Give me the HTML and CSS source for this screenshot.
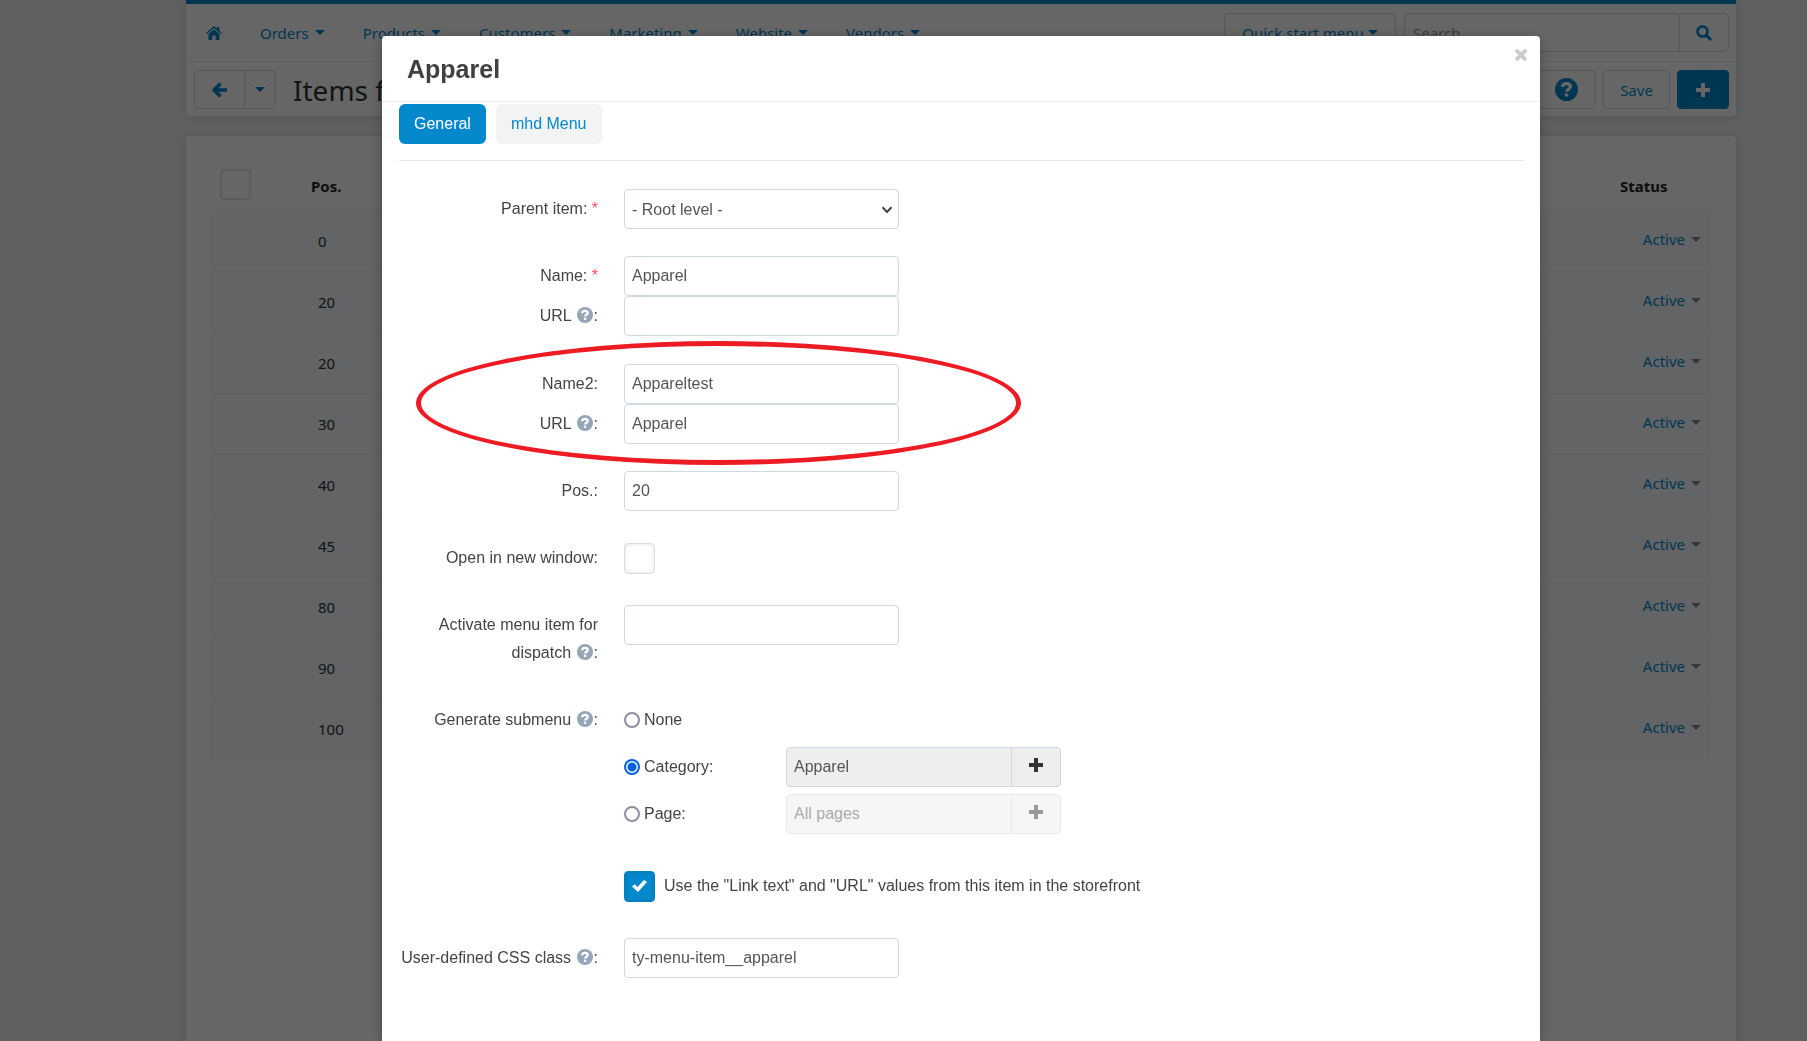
FILE: index.html
```html
<!DOCTYPE html>
<html lang="en">
<head>
<meta charset="utf-8">
<meta name="viewport" content="width=device-width, initial-scale=1">
<title>Apparel</title>
<link rel="stylesheet" href="styles.css">
</head>
<body>
<svg class="sprite" aria-hidden="true">
  <symbol id="i-plus" viewBox="0 0 14 14"><path d="M5 0h4v5h5v4H9v5H5V9H0V5h5z" fill="currentColor"/></symbol>
  <symbol id="i-help" viewBox="0 0 16 16"><circle cx="8" cy="8" r="8" fill="currentColor"/><path d="M5.2 6.300C5.200 4.600 6.400 3.900 8 3.900s2.700.8 2.700 2.200c0 1.700-2.600 1.600-2.600 3.500" fill="none" stroke="#fff" stroke-width="2.300"/><path d="M6.900 10.700h2.300v2.200H6.900z" fill="#fff"/></symbol>
</svg>

<div class="page">
  <header class="topbar">
    <nav class="nav">
      <a class="nav-home" href="#" aria-label="Home"><svg width="16" height="14" viewBox="0 0 16 14"><path d="M8 0l3 2.600V1h2.300v3.600L16 7l-1 1.100L8 2.100 1 8.100 0 7z M8 3.200l5.500 4.700V14H9.600V9.600H6.400V14H2.500V7.900z" fill="currentColor"/></svg></a>
      <a class="nav-link" href="#">Orders<span class="caret"></span></a>
      <a class="nav-link" href="#">Products<span class="caret"></span></a>
      <a class="nav-link" href="#">Customers<span class="caret"></span></a>
      <a class="nav-link" href="#">Marketing<span class="caret"></span></a>
      <a class="nav-link" href="#">Website<span class="caret"></span></a>
      <a class="nav-link" href="#">Vendors<span class="caret"></span></a>
      <div class="nav-tools">
        <button class="btn quick" type="button">Quick start menu<span class="caret"></span></button>
        <form class="search">
          <input class="search-input" type="search" placeholder="Search" aria-label="Search">
          <button class="search-btn" type="button" aria-label="Search"><svg width="16" height="16" viewBox="0 0 16 16"><circle cx="6.500" cy="6.500" r="5" fill="none" stroke="currentColor" stroke-width="2.600"/><path d="M10.200 10.200l4 4" stroke="currentColor" stroke-width="3" stroke-linecap="round"/></svg></button>
        </form>
      </div>
    </nav>
    <div class="actions">
      <div class="split">
        <button class="split-back" type="button" aria-label="Back"><svg width="16" height="16" viewBox="0 0 16 16"><path d="M8.500 1.500L2.200 8l6.300 6.500M3 8h12" fill="none" stroke="currentColor" stroke-width="3.600"/></svg></button>
        <button class="split-more" type="button" aria-label="Recent pages"><span class="caret"></span></button>
      </div>
      <h1 class="page-title">Items for menu</h1>
      <div class="action-tools">
        <button class="btn help-btn" type="button" aria-label="Help"><svg width="23" height="23"><use href="#i-help"/></svg></button>
        <button class="btn save-btn" type="button">Save</button>
        <button class="btn add-btn" type="button" aria-label="Add item"><svg width="14" height="14"><use href="#i-plus"/></svg></button>
      </div>
    </div>
  </header>

  <main class="card">
    <table class="items">
      <thead>
        <tr><th class="c-check"><input class="check" type="checkbox" aria-label="Select all"></th><th class="c-pos">Pos.</th><th></th><th class="c-status">Status</th></tr>
      </thead>
      <tbody>
        <tr><td></td><td class="pos">0</td><td></td><td class="status"><a href="#">Active<span class="caret"></span></a></td></tr>
        <tr><td></td><td class="pos">20</td><td></td><td class="status"><a href="#">Active<span class="caret"></span></a></td></tr>
        <tr><td></td><td class="pos">20</td><td></td><td class="status"><a href="#">Active<span class="caret"></span></a></td></tr>
        <tr><td></td><td class="pos">30</td><td></td><td class="status"><a href="#">Active<span class="caret"></span></a></td></tr>
        <tr><td></td><td class="pos">40</td><td></td><td class="status"><a href="#">Active<span class="caret"></span></a></td></tr>
        <tr><td></td><td class="pos">45</td><td></td><td class="status"><a href="#">Active<span class="caret"></span></a></td></tr>
        <tr><td></td><td class="pos">80</td><td></td><td class="status"><a href="#">Active<span class="caret"></span></a></td></tr>
        <tr><td></td><td class="pos">90</td><td></td><td class="status"><a href="#">Active<span class="caret"></span></a></td></tr>
        <tr><td></td><td class="pos">100</td><td></td><td class="status"><a href="#">Active<span class="caret"></span></a></td></tr>
      </tbody>
    </table>
  </main>
</div>

<div class="backdrop">
  <section class="modal" role="dialog" aria-labelledby="modal-title">
    <header class="modal-head">
      <h2 class="modal-title" id="modal-title">Apparel</h2>
      <button class="close" type="button" aria-label="Close"><svg width="12" height="12" viewBox="0 0 12 12"><path d="M2.200 2.200l7.600 7.600M9.800 2.200l-7.600 7.600" stroke="currentColor" stroke-width="4" stroke-linecap="round"/></svg></button>
    </header>
    <div class="modal-body">
      <div class="tabs">
        <button class="tab tab-active" type="button">General</button>
        <button class="tab" type="button">mhd Menu</button>
      </div>
      <form class="form">
        <div class="row">
          <label class="label" for="parent">Parent item: <span class="req">*</span></label>
          <div class="select-wrap">
            <select class="field" id="parent"><option>- Root level -</option></select>
            <svg class="chevron" width="12" height="8" viewBox="0 0 12 8"><path d="M1.500 1.200L6 6l4.500-4.800" fill="none" stroke="currentColor" stroke-width="2"/></svg>
          </div>
        </div>
        <div class="pair">
          <div class="row">
            <label class="label" for="name">Name: <span class="req">*</span></label>
            <input class="field" id="name" type="text" value="Apparel">
          </div>
          <div class="row">
            <label class="label" for="url">URL <svg class="hint" width="16" height="16"><use href="#i-help"/></svg>:</label>
            <input class="field" id="url" type="text">
          </div>
        </div>
        <div class="pair pair-marked">
          <div class="row">
            <label class="label" for="name2">Name2:</label>
            <input class="field" id="name2" type="text" value="Appareltest">
          </div>
          <div class="row">
            <label class="label" for="url2">URL <svg class="hint" width="16" height="16"><use href="#i-help"/></svg>:</label>
            <input class="field" id="url2" type="text" value="Apparel">
          </div>
          <div class="marker"></div>
        </div>
        <div class="row">
          <label class="label" for="position">Pos.:</label>
          <input class="field" id="position" type="text" value="20">
        </div>
        <div class="row">
          <label class="label" for="newwin">Open in new window:</label>
          <div class="line"><input class="check" id="newwin" type="checkbox"></div>
        </div>
        <div class="row">
          <label class="label" for="dispatch">Activate menu item for dispatch <svg class="hint" width="16" height="16"><use href="#i-help"/></svg>:</label>
          <input class="field" id="dispatch" type="text">
        </div>
        <div class="row" role="radiogroup" aria-labelledby="submenu">
          <span class="label" id="submenu">Generate submenu <svg class="hint" width="16" height="16"><use href="#i-help"/></svg>:</span>
          <div class="choices">
            <div class="line"><label class="choice"><input class="radio" type="radio" name="submenu">None</label></div>
            <div class="line">
              <label class="choice"><input class="radio" type="radio" name="submenu" checked>Category:</label>
              <div class="picker"><input class="picker-input" type="text" value="Apparel" readonly aria-label="Category"><button class="picker-btn" type="button" aria-label="Choose category"><svg width="14" height="14"><use href="#i-plus"/></svg></button></div>
            </div>
            <div class="line">
              <label class="choice"><input class="radio" type="radio" name="submenu">Page:</label>
              <div class="picker picker-off"><input class="picker-input" type="text" value="All pages" readonly aria-label="Page"><button class="picker-btn" type="button" aria-label="Choose page"><svg width="14" height="14"><use href="#i-plus"/></svg></button></div>
            </div>
          </div>
        </div>
        <div class="row row-check">
          <span class="label"></span>
          <label class="line line-check"><input class="check" type="checkbox" checked>Use the "Link text" and "URL" values from this item in the storefront</label>
        </div>
        <div class="row">
          <label class="label" for="cssclass">User-defined CSS class <svg class="hint" width="16" height="16"><use href="#i-help"/></svg>:</label>
          <input class="field" id="cssclass" type="text" value="ty-menu-item__apparel">
        </div>
      </form>
    </div>
  </section>
</div>
</body>
</html>
```
FILE: styles.css
```css
* { box-sizing: border-box; }

html, body { height: 100%; }

body {
  margin: 0;
  overflow: hidden;
  background: #ebeff3;
  color: #333;
  font-family: "Noto Sans", sans-serif;
  font-size: 15px;
}

button, input, select { font: inherit; color: inherit; margin: 0; }
button { cursor: pointer; padding: 0; background: none; border: 0; }
a { color: #0388cc; text-decoration: none; }
svg { display: block; flex: none; }
.sprite { position: absolute; width: 0; height: 0; }

.page {
  min-height: 100%;
  display: flex;
  flex-direction: column;
  gap: 20px;
  padding: 0 71px 0 186px;
}

.caret {
  display: inline-block;
  border: 5px solid transparent;
  border-top-color: currentColor;
  border-bottom: 0;
}

/* Top bar */
.topbar {
  background: #fff;
  border-top: 4px solid #0388cc;
  border-radius: 0 0 4px 4px;
  box-shadow: 0 1px 8px rgba(0, 0, 0, 0.12);
}

.nav {
  display: flex;
  align-items: center;
  height: 57px;
  padding: 0 7px 0 20px;
}

.nav-home { color: #0388cc; margin-right: 38px; }
.nav-link { display: flex; align-items: center; gap: 6px; margin-right: 38px; }
.nav-tools { display: flex; gap: 8px; margin-left: auto; }

.btn {
  display: flex;
  align-items: center;
  justify-content: center;
  height: 39px;
  border: 1px solid #d0d8e0;
  border-radius: 4px;
  color: #0388cc;
}

.quick { width: 172px; gap: 4px; }

.search {
  display: flex;
  width: 325px;
  height: 39px;
  border: 1px solid #d0d8e0;
  border-radius: 4px;
}

.search-input {
  flex: 1;
  min-width: 0;
  padding: 0 8px;
  border: 0;
  background: none;
}
.search-input::placeholder { color: #999; }

.search-btn {
  display: grid;
  place-items: center;
  width: 49px;
  border-left: 1px solid #d0d8e0;
  color: #0388cc;
}

.actions {
  display: flex;
  align-items: center;
  height: 55px;
  padding: 1px 7px 0 8px;
  border-top: 1px solid #eee;
}

.split {
  display: flex;
  height: 39px;
  border: 1px solid #d0d8e0;
  border-radius: 4px;
  color: #0388cc;
}
.split-back, .split-more { display: grid; place-items: center; }
.split-back { width: 49px; }
.split-more { width: 31px; border-left: 1px solid #d0d8e0; }

.page-title {
  margin: 0 0 0 17px;
  font-size: 28px;
  font-weight: 400;
  white-space: nowrap;
}

.action-tools { display: flex; gap: 7px; margin-left: auto; }
.help-btn { width: 60px; }
.save-btn { width: 67px; }
.add-btn { width: 52px; background: #0388cc; border-color: #0388cc; color: #fff; }

/* Item list */
.card {
  flex: 1;
  padding: 14px 25px;
  background: #fff;
  border-radius: 4px 4px 0 0;
  box-shadow: 0 1px 8px rgba(0, 0, 0, 0.12);
}

.items {
  width: 100%;
  table-layout: fixed;
  border-collapse: collapse;
}
.items th { height: 60px; padding: 12px 0 0; text-align: left; color: #222; }
.items td { height: 61px; padding: 0; border-top: 1px solid #e8edf0; background: #f6fafd; }
.items .c-check { width: 100px; padding: 10px 0 0 9px; }
.items .c-pos { width: 160px; }
.items .c-status { width: 91px; }
.items .pos { padding-left: 7px; }
.items .status { padding: 0 10px 3px 0; }
.status a { display: flex; align-items: center; justify-content: flex-end; gap: 6px; }
.status .caret { color: #888; }

.check {
  appearance: none;
  display: block;
  flex: none;
  width: 31px;
  height: 31px;
  border: 1px solid #ddd;
  border-radius: 4px;
  background: #fff;
  box-shadow: inset 0 0 4px rgba(0, 0, 0, 0.12);
}
.check:checked {
  display: grid;
  place-items: center;
  border-color: #0380c0;
  background: #0388cc;
}
.check:checked::before {
  content: "";
  width: 15px;
  height: 12px;
  background: #fff;
  clip-path: polygon(0 55%, 17% 36%, 37% 59%, 80% 0, 100% 17%, 40% 100%);
}

/* Modal */
.backdrop {
  position: fixed;
  inset: 0;
  display: flex;
  padding: 36px 267px 0 382px;
  background: rgba(0, 0, 0, 0.6);
}

.modal {
  flex: 1;
  min-width: 0;
  background: #fff;
  border-radius: 4px 4px 0 0;
  box-shadow: 0 3px 14px rgba(0, 0, 0, 0.3);
  color: #444;
  font-family: "Liberation Sans", Arial, sans-serif;
  font-size: 16px;
}

.modal-head {
  display: flex;
  align-items: flex-start;
  justify-content: space-between;
  height: 66px;
  padding: 13px 13px 0 25px;
  border-bottom: 1px solid #eee;
}
.modal-title { margin: 0; font-size: 25px; line-height: 40px; color: #404040; }
.close { color: #ccc; }

.modal-body { padding: 2px 16px 0 17px; }

.tabs {
  display: flex;
  gap: 10px;
  padding-bottom: 16px;
  border-bottom: 1px solid #dfe8f0;
}
.tab {
  height: 40px;
  padding: 0 15px;
  border-radius: 6px;
  background: #f3f3f3;
  color: #0388cc;
}
.tab-active { background: #0388cc; color: #fff; }

.form {
  display: flex;
  flex-direction: column;
  gap: 27px;
  padding-top: 28px;
}
.row { display: flex; gap: 26px; align-items: flex-start; }
.row-check { padding: 5px 0; }
.pair { padding-bottom: 1px; }
.pair-marked { position: relative; padding-bottom: 0; }

.label {
  width: 199px;
  flex: none;
  padding: 6px 0;
  line-height: 28px;
  text-align: right;
}
.req { color: #ff4f60; }
.hint { display: inline-block; margin: 0 1px; vertical-align: -2px; color: #94a6b8; }

.field {
  width: 275px;
  height: 40px;
  padding: 0 7px;
  border: 1px solid #d0d8e2;
  border-radius: 4px;
  background: #fff;
  color: #555;
}
select.field { appearance: none; display: block; }
.select-wrap { position: relative; }
.chevron { position: absolute; right: 6px; top: 17px; pointer-events: none; }

.line { display: flex; align-items: center; height: 40px; }
.line-check { gap: 9px; }
.choices { display: flex; flex-direction: column; gap: 7px; }
.choice { display: flex; align-items: center; gap: 4px; width: 162px; }

.radio {
  appearance: none;
  width: 16px;
  height: 16px;
  border: 2px solid #8f8f9d;
  border-radius: 50%;
  background: #fff;
}
.radio:checked {
  border-color: #0060df;
  background: radial-gradient(circle, #0060df 4px, #fff 5px);
}

.picker {
  display: flex;
  width: 275px;
  height: 40px;
  border: 1px solid #d0d8e2;
  border-radius: 4px;
  background: #eee;
}
.picker-input {
  flex: 1;
  min-width: 0;
  padding: 0 7px;
  border: 0;
  background: none;
  color: #555;
}
.picker-btn {
  display: grid;
  place-items: center;
  width: 49px;
  border-left: 1px solid #d0d8e2;
  padding-bottom: 4px;
  color: #333;
}
.picker-off { opacity: 0.5; }

/* Red ring drawn over the second name and URL pair */
.marker {
  position: absolute;
  left: 17px;
  top: -23px;
  width: 605px;
  height: 124px;
  border: 5px solid #ed1c24;
  border-radius: 50%;
  pointer-events: none;
}
```
